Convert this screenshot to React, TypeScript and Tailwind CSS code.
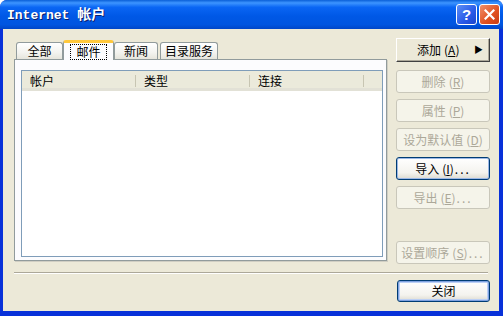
import React from "react";

const FONT = { fontFamily: '"Noto Sans CJK SC", "Noto Sans", sans-serif' };

function Tab({ label, active, w }: { label: string; active?: boolean; w: string }) {
  if (active) {
    return (
      <div className={`relative z-10 -mb-px h-[20px] ${w} bg-[#fcfcfe] border-x border-[#919b9c] border-t-[3px] border-t-[#ffc83c] rounded-t-[3px] flex items-center justify-center`}>
        <span className="outline outline-1 outline-dotted outline-black px-[5px] leading-[14px] text-[12px] text-black">
          {label}
        </span>
      </div>
    );
  }
  return (
    <div className={`h-[17px] ${w} border border-b-0 border-[#919b9c] rounded-t-[3px] bg-[linear-gradient(to_bottom,#ffffff,#f3f3ef_60%,#e6e5dc)] flex items-center justify-center text-[12px] leading-[14px] text-black`}>
      {label}
    </div>
  );
}

function Btn({
  label,
  hot,
  rest,
  disabled,
  focus,
  cls,
}: {
  label: string;
  hot: string;
  rest?: string;
  disabled?: boolean;
  focus?: boolean;
  cls?: string;
}) {
  const base =
    "w-[94px] h-[23px] rounded-[3px] flex items-center justify-center text-[12px] leading-none";
  const look = disabled
    ? "border border-[#c9c7ba] bg-[#f5f4ea] text-[#aca899]"
    : focus
    ? "border border-[#003c74] bg-[linear-gradient(to_bottom,#ffffff,#f4f3ee_70%,#dcdad0)] text-black shadow-[inset_0_0_0_1px_#9cb8e6]"
    : "border border-[#003c74] bg-[linear-gradient(to_bottom,#ffffff,#f4f3ee_70%,#dcdad0)] text-black";
  return (
    <div className={`${base} ${look} ${cls ?? ""}`}>
      <span>
        {label}
        <span className="ml-[3px]">(</span>
        <span className="underline">{hot}</span>
        <span>)</span>
        {rest && <span className="tracking-[2px] ml-[1px]">{rest}</span>}
      </span>
    </div>
  );
}

export default function App() {
  return (
    <div className="w-[503px] h-[316px] bg-white" style={FONT}>
      <div className="w-full h-full rounded-t-[7px] bg-[#0831d9] flex flex-col overflow-hidden">
        {/* title bar */}
        <div className="h-[29px] shrink-0 bg-[linear-gradient(to_bottom,#0a5fd8,#3d95ff_10%,#0a66f4_25%,#0058e6_55%,#0055e0_85%,#0046c8)] flex items-center pl-[7px] pr-[3px]">
          <span
            className="text-white font-bold text-[13px] [text-shadow:1px_1px_0_#0a1e6c]"
            style={{ fontFamily: '"Liberation Mono", "Noto Sans CJK SC", monospace' }}
          >
            Internet <span className="text-[14px]" style={FONT}>帐户</span>
          </span>
          <div className="ml-auto flex gap-[2px]">
            <div className="w-[21px] h-[21px] rounded-[3px] border border-white bg-[linear-gradient(135deg,#5d8ff5,#2859e8_60%,#1c45cc)] flex items-center justify-center text-white font-bold text-[15px] leading-none" style={{ fontFamily: '"Liberation Sans", sans-serif' }}>
              ?
            </div>
            <div className="w-[21px] h-[21px] rounded-[3px] border border-white bg-[linear-gradient(135deg,#f0906c,#e0501f_60%,#c83c14)] flex items-center justify-center">
              <svg width="11" height="11" viewBox="0 0 11 11">
                <path d="M1.5 1.5 L9.5 9.5 M9.5 1.5 L1.5 9.5" stroke="white" strokeWidth="2.2" strokeLinecap="square" />
              </svg>
            </div>
          </div>
        </div>

        {/* client */}
        <div className="flex-1 ml-[3px] mr-[4px] mb-[5px] bg-[#ece9d8] flex flex-col pl-[11px] pt-[9px]">
          <div className="flex gap-[9px]">
            <div className="w-[373px] flex flex-col pt-[2px]">
              <div className="flex items-end h-[19px] pl-[2px]">
                <Tab label="全部" w="w-[47px]" />
                <Tab label="邮件" w="w-[51px]" active />
                <Tab label="新闻" w="w-[44px]" />
                <div className="ml-[2px]">
                  <Tab label="目录服务" w="w-[58px]" />
                </div>
              </div>
              <div className="h-[202px] border border-[#919b9c] bg-[#fcfcfe] pt-[10px] pl-[6px] pr-[3px] pb-[3px] shadow-[1px_1px_0_#d0cec3]">
                <div className="h-full border border-[#7f9db9] bg-white flex flex-col">
                  <div className="h-[20px] flex bg-[#ebeadb] border-b-[3px] border-[#e2e1d6] text-[12px] text-black">
                    {["帐户", "类型", "连接"].map((h) => (
                      <div key={h} className="w-[114px] flex items-center pl-[8px] pt-[2px] relative">
                        {h}
                        <div className="absolute right-0 top-[4px] h-[12px] w-px bg-[#c7c5b2]" />
                      </div>
                    ))}
                  </div>
                </div>
              </div>
            </div>

            <div className="flex flex-col">
              <div className="w-[94px] h-[24px] bg-[#ece9d8] border border-white border-r-[#404040] border-b-[#404040] shadow-[inset_-1px_-1px_0_#aca899] flex items-center text-[12px] text-black pl-[20px] pr-[6px]">
                <span>
                  添加<span className="ml-[3px]">(</span>
                  <span className="underline">A</span>)
                </span>
                <span className="ml-auto text-[9px]">▶</span>
              </div>
              <Btn label="删除" hot="R" disabled cls="mt-[8px]" />
              <Btn label="属性" hot="P" disabled cls="mt-[6px]" />
              <Btn label="设为默认值" hot="D" disabled cls="mt-[6px]" />
              <Btn label="导入" hot="I" rest="..." focus cls="mt-[6px]" />
              <Btn label="导出" hot="E" rest="..." disabled cls="mt-[6px]" />
              <Btn label="设置顺序" hot="S" rest="..." disabled cls="mt-[32px] h-[21px]" />
            </div>
          </div>

          <div className="mt-[8px] mr-[11px] border-t border-[#aca899] border-b border-b-white" />

          <div className="flex justify-end mr-[9px] mt-[6px]">
            <div className="w-[93px] h-[22px] rounded-[3px] border border-[#003c74] bg-[linear-gradient(to_bottom,#ffffff,#f4f3ee_70%,#dcdad0)] shadow-[inset_0_0_0_1px_#7ea1e0,inset_0_0_0_2px_#bcd0f5] flex items-center justify-center text-[12px] text-black">
              关闭
            </div>
          </div>
        </div>
      </div>
    </div>
  );
}
